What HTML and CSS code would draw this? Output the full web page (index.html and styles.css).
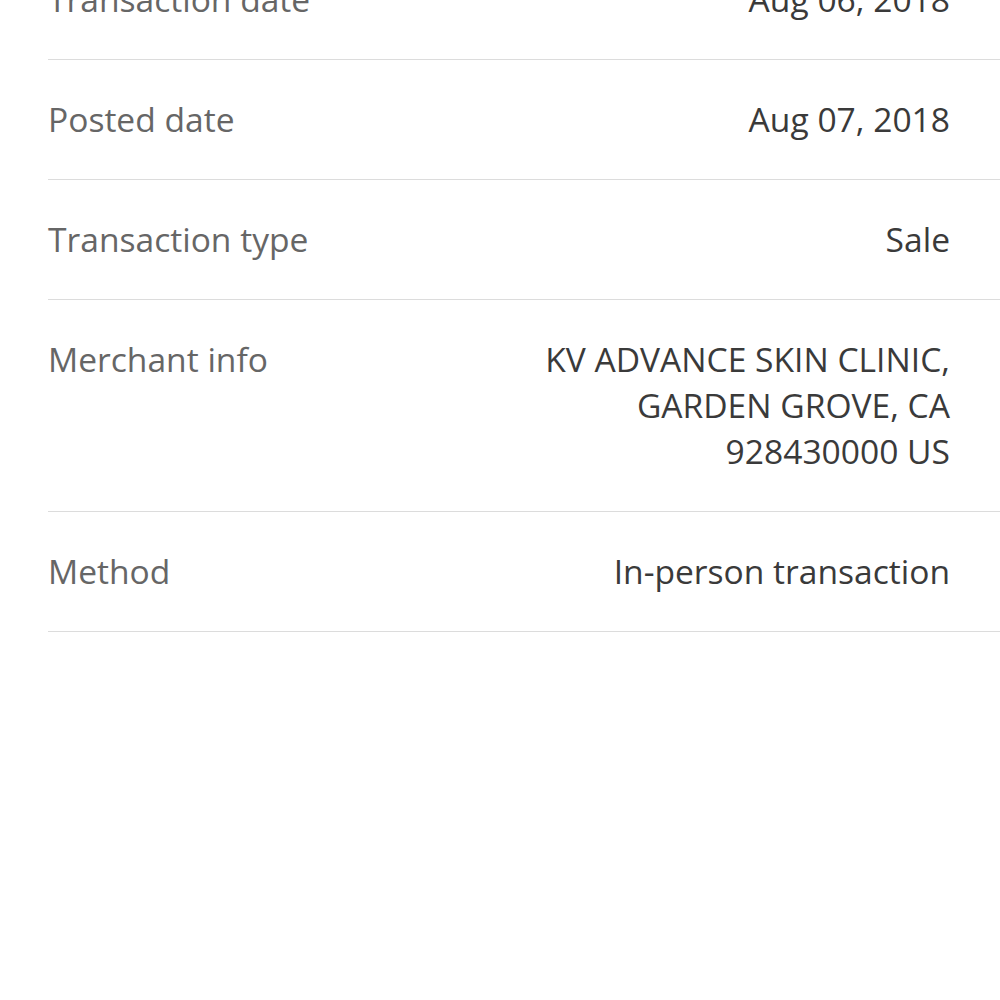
FILE: index.html
```html
<!DOCTYPE html>
<html lang="en">
<head>
  <meta charset="UTF-8">
  <meta name="viewport" content="width=device-width, initial-scale=1.0">
  <title>Transaction details</title>
  <link rel="stylesheet" href="styles.css">
</head>
<body>
  <div class="details">
    <div class="row">
      <div class="label">Transaction date</div>
      <div class="value">Aug 06, 2018</div>
    </div>
    <div class="row">
      <div class="label">Posted date</div>
      <div class="value">Aug 07, 2018</div>
    </div>
    <div class="row">
      <div class="label">Transaction type</div>
      <div class="value">Sale</div>
    </div>
    <div class="row">
      <div class="label">Merchant info</div>
      <div class="value">KV ADVANCE SKIN CLINIC,<br>GARDEN GROVE, CA<br>928430000 US</div>
    </div>
    <div class="row">
      <div class="label">Method</div>
      <div class="value">In-person transaction</div>
    </div>
  </div>
</body>
</html>
```

FILE: styles.css
```css
html, body {
  margin: 0;
  padding: 0;
  background: #fff;
  font-family: "Open Sans", "Liberation Sans", sans-serif;
  overflow: hidden;
}
.details {
  margin-top: -60px;
  margin-left: 48px;
}
.row {
  display: flex;
  justify-content: space-between;
  align-items: flex-start;
  padding: 36px 50px 37px 0;
  border-bottom: 1px solid #dcdcdc;
  font-size: 33.6px;
  line-height: 46px;
}
.label {
  color: #666;
}
.value {
  color: #3a3a3a;
  text-align: right;
}
```
